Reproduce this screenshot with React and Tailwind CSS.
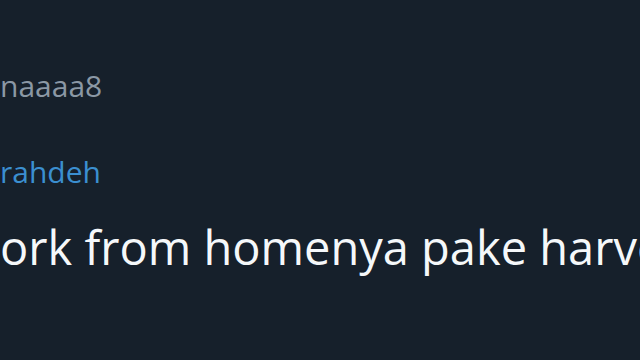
export default function App() {
  return (
    <div className="w-[640px] h-[360px] overflow-hidden bg-[#16202b] font-['Segoe_UI','Open_Sans','Noto_Sans',sans-serif]">
      <div className="flex flex-col pt-[67px]">
        <div className="text-[30px] leading-[38px] text-[#8b98a5] whitespace-nowrap">naaaa8</div>
        <div className="mt-[48px] text-[30px] leading-[38px] text-[#3b8fd0] whitespace-nowrap">rahdeh</div>
        <div className="mt-[28px] text-[47px] leading-[56px] text-[#f5f8fa] whitespace-nowrap">ork from homenya pake harvest</div>
      </div>
    </div>
  );
}
